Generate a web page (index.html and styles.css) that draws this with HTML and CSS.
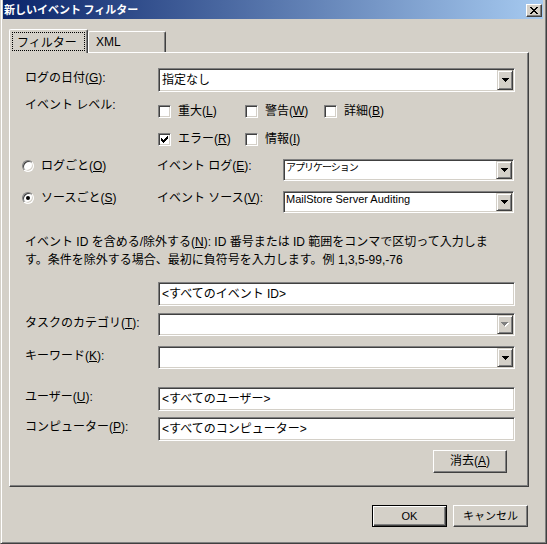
FILE: index.html
```html
<!DOCTYPE html>
<html lang="ja">
<head>
<meta charset="utf-8">
<title>新しいイベント フィルター</title>
<link rel="stylesheet" href="styles.css">
</head>
<body>
<div class="window">
  <div class="titlebar">
    <span class="title">新しいイベント フィルター</span>
    <span class="close">
      <svg width="8" height="7" viewBox="0 0 8 7" shape-rendering="crispEdges">
        <path fill="#000" d="M0 0h2v1h-2zM6 0h2v1h-2zM1 1h2v1h-2zM5 1h2v1h-2zM2 2h4v1h-4zM3 3h2v1h-2zM2 4h4v1h-4zM1 5h2v1h-2zM5 5h2v1h-2zM0 6h2v1h-2zM6 6h2v1h-2z"/>
      </svg>
    </span>
  </div>
  <div class="body">
    <div class="tabs">
      <div class="tab active"><span class="focus">フィルター</span></div>
      <div class="tab xml">XML</div>
    </div>
    <div class="panel">
      <div class="row r-date">
        <div class="lbl">ログの日付(<u>G</u>):</div>
        <div class="field combo big">
          <span class="ctext">指定なし</span>
          <span class="arrow"><svg width="7" height="4" viewBox="0 0 7 4" shape-rendering="crispEdges"><path fill="#000" d="M0 0h7v1h-7zM1 1h5v1h-5zM2 2h3v1h-3zM3 3h1v1h-1z"/></svg></span>
        </div>
      </div>

      <div class="row r-level">
        <div class="lbl lbl-top">イベント レベル:</div>
        <div class="checks">
          <div class="chk"><span class="field cbox"></span><span>重大(<u>L</u>)</span></div>
          <div class="chk"><span class="field cbox"></span><span>警告(<u>W</u>)</span></div>
          <div class="chk"><span class="field cbox"></span><span>詳細(<u>B</u>)</span></div>
          <div class="chk"><span class="field cbox"><svg width="7" height="7" viewBox="0 0 7 7" shape-rendering="crispEdges"><path fill="#000" d="M6 0h1v1h-1zM5 1h2v1h-2zM0 2h1v1h-1zM4 2h3v1h-3zM0 3h2v1h-2zM3 3h3v1h-3zM0 4h5v1h-5zM1 5h3v1h-3zM2 6h1v1h-1z"/></svg></span><span>エラー(<u>R</u>)</span></div>
          <div class="chk"><span class="field cbox"></span><span>情報(<u>I</u>)</span></div>
        </div>
      </div>

      <div class="row r-radio r-radio1">
        <div class="rcol"><span class="radio"></span><span class="rtext">ログごと(<u>O</u>)</span></div>
        <div class="lbl2">イベント ログ(<u>E</u>):</div>
        <div class="field combo sm">
          <span class="ctext bitmap"><span class="kana">アプリケーション</span></span>
          <span class="arrow"><svg width="7" height="4" viewBox="0 0 7 4" shape-rendering="crispEdges"><path fill="#000" d="M0 0h7v1h-7zM1 1h5v1h-5zM2 2h3v1h-3zM3 3h1v1h-1z"/></svg></span>
        </div>
      </div>

      <div class="row r-radio r-radio2">
        <div class="rcol"><span class="radio on"></span><span class="rtext">ソースごと(<u>S</u>)</span></div>
        <div class="lbl2">イベント ソース(<u>V</u>):</div>
        <div class="field combo sm">
          <span class="ctext bitmap">MailStore Server Auditing</span>
          <span class="arrow"><svg width="7" height="4" viewBox="0 0 7 4" shape-rendering="crispEdges"><path fill="#000" d="M0 0h7v1h-7zM1 1h5v1h-5zM2 2h3v1h-3zM3 3h1v1h-1z"/></svg></span>
        </div>
      </div>

      <p class="desc">イベント ID を含める/除外する(<u>N</u>): ID 番号または ID 範囲をコンマで区切って入力しま<br>す。条件を除外する場合、最初に負符号を入力します。例 1,3,5-99,-76</p>

      <div class="row r-id">
        <div class="lbl"></div>
        <div class="field input">&lt;すべてのイベント ID&gt;</div>
      </div>

      <div class="row r-task">
        <div class="lbl">タスクのカテゴリ(<u>T</u>):</div>
        <div class="field combo mid">
          <span class="ctext"></span>
          <span class="arrow"><svg width="8" height="5" viewBox="0 0 8 5" shape-rendering="crispEdges"><path fill="#fff" d="M1 1h7v1h-7zM2 2h5v1h-5zM3 3h3v1h-3zM4 4h1v1h-1z"/><path fill="#808080" d="M0 0h7v1h-7zM1 1h5v1h-5zM2 2h3v1h-3zM3 3h1v1h-1z"/></svg></span>
        </div>
      </div>

      <div class="row r-kw">
        <div class="lbl">キーワード(<u>K</u>):</div>
        <div class="field combo mid">
          <span class="ctext"></span>
          <span class="arrow"><svg width="7" height="4" viewBox="0 0 7 4" shape-rendering="crispEdges"><path fill="#000" d="M0 0h7v1h-7zM1 1h5v1h-5zM2 2h3v1h-3zM3 3h1v1h-1z"/></svg></span>
        </div>
      </div>

      <div class="row r-user">
        <div class="lbl">ユーザー(<u>U</u>):</div>
        <div class="field input">&lt;すべてのユーザー&gt;</div>
      </div>

      <div class="row r-comp">
        <div class="lbl">コンピューター(<u>P</u>):</div>
        <div class="field input">&lt;すべてのコンピューター&gt;</div>
      </div>

      <div class="row r-clear">
        <button class="btn btn-clear" type="button">消去(<u>A</u>)</button>
      </div>
    </div>

    <div class="footer">
      <button class="btn btn-default bitmap" type="button">OK</button>
      <button class="btn bitmap" type="button">キャンセル</button>
    </div>
  </div>
</div>
</body>
</html>
```

FILE: styles.css
```css
* {
  box-sizing: border-box;
}

html,
body {
  margin: 0;
  padding: 0;
}

body {
  background: #d4d0c8;
  color: #000;
  font-family: "Liberation Sans", "Noto Sans CJK JP", sans-serif;
  font-size: 12px;
  line-height: 16px;
}

u {
  text-decoration: underline;
  text-underline-offset: 1px;
}

.window {
  width: 547px;
  height: 544px;
  border-left: 1px solid #d4d0c8;
  border-right: 1px solid #404040;
  border-bottom: 1px solid #404040;
  box-shadow: inset 1px 0 #fff, inset -1px -1px #808080;
  padding: 0 3px 2px 2px;
  display: flex;
  flex-direction: column;
}

/* title bar */
.titlebar {
  height: 19px;
  flex: none;
  background: linear-gradient(to right, #0a246a, #a6caf0);
  display: flex;
  align-items: flex-start;
  justify-content: space-between;
  padding: 0 1px 0 1px;
}

.title {
  color: #fff;
  font-family: "Noto Sans CJK JP", sans-serif;
  font-weight: bold;
  font-size: 11px;
  line-height: 19px;
}

.close {
  width: 16px;
  height: 13px;
  margin-top: 4px;
  background: #d4d0c8;
  border: 1px solid;
  border-color: #fff #404040 #404040 #fff;
  box-shadow: inset -1px -1px #808080;
  display: flex;
  align-items: center;
  justify-content: center;
}

.close svg {
  display: block;
  margin-left: -1px;
}

/* body */
.body {
  flex: 1;
  padding: 10px 14px 0 6px;
  display: flex;
  flex-direction: column;
}

.tabs {
  display: flex;
  align-items: flex-end;
  height: 23px;
  position: relative;
  z-index: 1;
}

.tab {
  height: 21px;
  border: 1px solid;
  border-color: #fff #404040 transparent #fff;
  border-bottom: 0;
  border-radius: 2px 2px 0 0;
  box-shadow: inset -1px 0 #808080;
  background: #d4d0c8;
  font-family: "Noto Sans CJK JP", sans-serif;
  line-height: 20px;
}

.tab.active {
  width: 79px;
  height: 24px;
  margin-bottom: -1px;
  padding: 2px 2px 0 2px;
}

.tab.xml {
  width: 78px;
  padding-left: 7px;
  font-family: "Liberation Sans", sans-serif;
}

.focus {
  display: block;
  height: 19px;
  border: 1px dotted #000;
  padding-left: 4px;
  line-height: 17px;
}

.panel {
  width: 520px;
  height: 435px;
  flex: none;
  border: 1px solid;
  border-color: #fff #404040 #404040 #fff;
  box-shadow: inset -1px -1px #808080;
  padding: 15px 12px 0 15px;
  display: flex;
  flex-direction: column;
}

.row {
  display: flex;
  align-items: flex-start;
  flex: none;
}

.lbl {
  width: 133px;
  flex: none;
  margin-top: 2px;
  line-height: 16px;
  white-space: nowrap;
}

.lbl-top {
  margin-top: 0;
}

/* sunken fields */
.field {
  background: #fff;
  border: 1px solid;
  border-color: #808080 #fff #fff #808080;
  box-shadow: inset 1px 1px #404040, inset -1px -1px #d4d0c8;
  padding: 1px;
}

.combo {
  display: flex;
  align-items: stretch;
}

.combo .ctext {
  flex: 1;
  padding-left: 2px;
  white-space: nowrap;
  overflow: hidden;
}

.combo .arrow {
  width: 16px;
  flex: none;
  background: #d4d0c8;
  border: 1px solid;
  border-color: #d4d0c8 #404040 #404040 #d4d0c8;
  box-shadow: inset 1px 1px #fff, inset -1px -1px #808080;
  display: flex;
  align-items: center;
  justify-content: center;
}

.combo .arrow svg {
  display: block;
}

.combo.big {
  width: 357px;
  height: 24px;
}

.combo.big .ctext {
  line-height: 20px;
}

.combo.mid {
  width: 357px;
  height: 23px;
}

.combo.sm {
  width: 231px;
  height: 22px;
}

.bitmap {
  font-family: "Liberation Sans", "Noto Sans CJK JP", sans-serif;
  font-size: 11px;
}

.combo.sm .ctext {
  line-height: 13px;
  padding-left: 1px;
}

.kana {
  font-size: 10px;
  letter-spacing: -1px;
}

.input {
  width: 357px;
  height: 24px;
  padding-left: 3px;
  line-height: 20px;
  white-space: nowrap;
}

/* event levels */
.r-level {
  margin-top: 5px;
}

.checks {
  display: grid;
  grid-template-columns: 87px 79px auto;
  grid-auto-rows: 28px;
  align-items: center;
}

.chk {
  display: flex;
  align-items: center;
  gap: 7px;
  white-space: nowrap;
}

.cbox {
  width: 13px;
  height: 13px;
  flex: none;
  display: flex;
  align-items: center;
  justify-content: center;
}

.cbox svg {
  display: block;
}

/* radios */
.r-radio {
  height: 22px;
}

.r-radio1 {
  margin-top: 6px;
}

.r-radio2 {
  margin-top: 10px;
}

.rcol {
  width: 135px;
  margin-left: -3px;
  display: flex;
  align-items: flex-start;
  gap: 7px;
  flex: none;
}

.rtext,
.lbl2 {
  line-height: 15px;
  white-space: nowrap;
}

.lbl2 {
  width: 126px;
  flex: none;
}

.radio {
  width: 12px;
  height: 12px;
  margin-top: 1px;
  flex: none;
  border-radius: 50%;
  background: #fff;
  border: 1px solid;
  border-color: #808080 #fff #fff #808080;
  box-shadow: inset 1px 1px #404040, inset -1px -1px #d4d0c8;
  position: relative;
}

.radio.on::after {
  content: "";
  position: absolute;
  left: 3px;
  top: 3px;
  width: 4px;
  height: 4px;
  border-radius: 50%;
  background: #000;
}

.desc {
  margin: 20px 0 0;
  line-height: 18px;
  white-space: nowrap;
}

.r-id {
  margin-top: 13px;
}

.r-task {
  margin-top: 7px;
}

.r-kw {
  margin-top: 10px;
}

.r-user {
  margin-top: 18px;
}

.r-comp {
  margin-top: 6px;
}

.r-clear {
  margin-top: 9px;
  justify-content: flex-end;
  padding-right: 9px;
}

/* buttons */
.btn {
  width: 75px;
  height: 22px;
  padding: 0;
  margin: 0;
  font: inherit;
  color: #000;
  background: #d4d0c8;
  border: 1px solid;
  border-color: #fff #404040 #404040 #fff;
  box-shadow: inset -1px -1px #808080;
  line-height: 18px;
  text-align: center;
}

.btn-clear {
  width: 74px;
  height: 23px;
  line-height: 19px;
}

.btn.bitmap {
  font-size: 11px;
}

.btn-default {
  border: 1px solid #000;
  box-shadow: inset 1px 1px #fff, inset -1px -1px #404040, inset -2px -2px #808080;
}

.footer {
  display: flex;
  justify-content: flex-end;
  gap: 6px;
  margin-top: 18px;
  padding-right: 1px;
}
```
